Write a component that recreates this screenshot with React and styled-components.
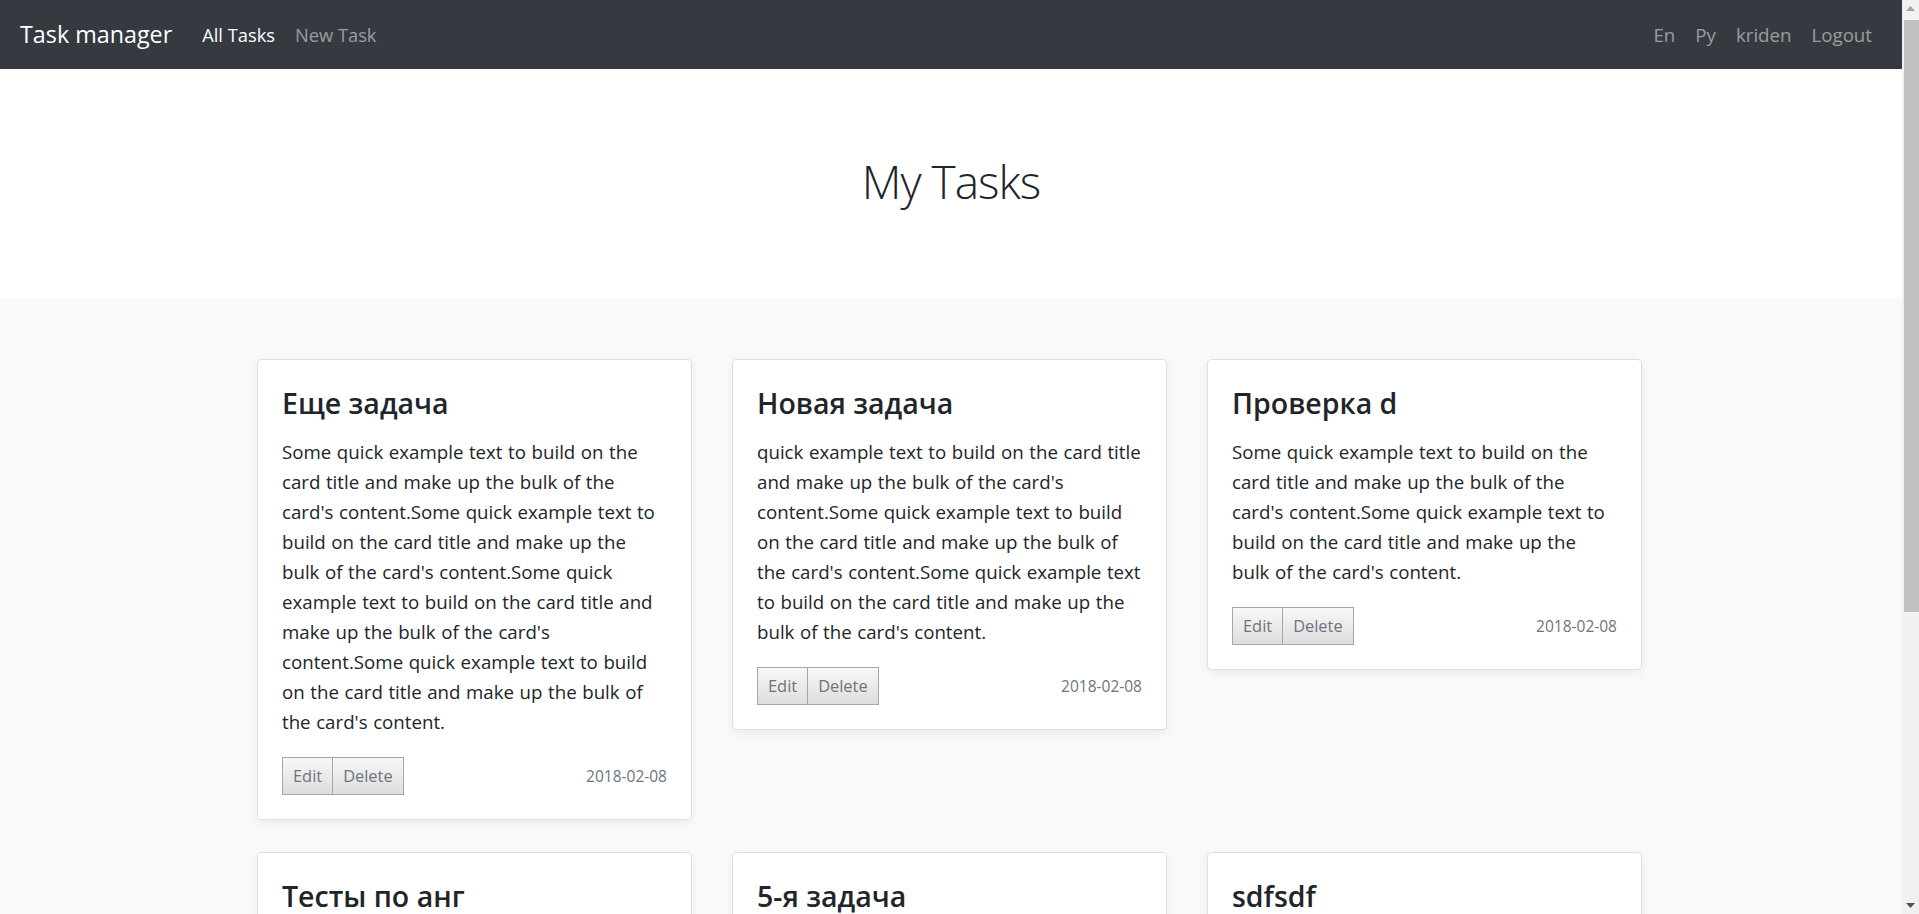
import React from "react";
import styled, { createGlobalStyle } from "styled-components";

const GlobalStyle = createGlobalStyle`
  html, body { margin: 0; padding: 0; }
  body {
    font-family: "Open Sans", "Noto Sans", Arial, sans-serif;
    background: #f8f9fa;
    color: #212529;
  }
  * { box-sizing: border-box; }
`;

const Viewport = styled.div`
  display: flex;
  height: 100vh;
  overflow: hidden;
`;

const Page = styled.div`
  flex: 1;
  min-width: 0;
  overflow: hidden;
  background: #f8f9fa;
`;

const ScrollTrack = styled.div`
  width: 17px;
  flex: none;
  background: #f1f1f1;
  display: flex;
  flex-direction: column;
  align-items: center;
`;

const ScrollArrow = styled.div`
  height: 17px;
  width: 100%;
  display: flex;
  align-items: center;
  justify-content: center;
  flex: none;
`;

const ScrollThumb = styled.div`
  width: 15px;
  margin-left: 1px;
  height: 592px;
  margin-top: 3px;
  background: #c1c1c1;
`;

const ScrollSpacer = styled.div`
  flex: 1;
`;

const Navbar = styled.nav`
  height: 69px;
  background: #343a40;
  display: flex;
  align-items: center;
  padding: 0 20px;
`;

const Brand = styled.a`
  font-size: 23.3px;
  color: #fff;
  margin-right: 20px;
  text-decoration: none;
  line-height: 1.5;
`;

const NavList = styled.div`
  display: flex;
  align-items: center;
  margin-left: ${(p) => (p.$right ? "auto" : "0")};
  font-size: ${(p) => (p.$right ? "18.7px" : "18.3px")};
`;

const NavLink = styled.a`
  font-size: inherit;
  padding: 10px;
  color: ${(p) => (p.$active ? "#fff" : "rgba(255,255,255,0.5)")};
  text-decoration: none;
`;

const Jumbotron = styled.header`
  background: #fff;
  height: 229px;
  display: flex;
  align-items: center;
  justify-content: center;
`;

const PageTitle = styled.h1`
  margin: 0 0 4px;
  font-size: 46px;
  letter-spacing: -1px;
  font-weight: 300;
  color: #212529;
  line-height: 1.2;
`;

const Main = styled.main`
  padding: 61px 3px 40px 0;
  display: grid;
  grid-template-columns: repeat(3, 435px);
  column-gap: 40px;
  row-gap: 32px;
  justify-content: center;
  align-items: start;
`;

const Card = styled.article`
  background: #fff;
  border: 1px solid rgba(0, 0, 0, 0.125);
  border-radius: 5px;
  box-shadow: 0 3px 10px rgba(0, 0, 0, 0.06);
  padding: 24px;
`;

const CardTitle = styled.h4`
  margin: 0 0 15px;
  font-size: 28.5px;
  font-weight: 600;
  line-height: 38px;
  color: #212529;
`;

const CardText = styled.p`
  margin: 0 0 20px;
  font-size: 18.7px;
  word-spacing: 0.7px;
  line-height: 30px;
  color: #212529;
`;

const CardFooter = styled.div`
  display: flex;
  align-items: center;
  justify-content: space-between;
`;

const BtnGroup = styled.div`
  display: flex;
`;

const Btn = styled.button`
  font-family: inherit;
  font-size: 16.4px;
  line-height: 26px;
  padding: 5px 10px;
  color: #6c757d;
  background: linear-gradient(#f8f8f8, #dddddd);
  border: 1px solid #a6a6a6;
  border-radius: 0;
  cursor: pointer;
  & + & { border-left: none; }
`;

const DateText = styled.small`
  font-size: 15.5px;
  color: #6c757d;
`;

const lorem = "Some quick example text to build on the card title and make up the bulk of the card's content.";

const tasks = [
  { title: "Еще задача", text: lorem + lorem + lorem + lorem },
  { title: "Новая задача", text: "quick example text to build on the card title and make up the bulk of the card's content." + lorem + lorem },
  { title: "Проверка d", text: lorem + lorem },
  { title: "Тесты по анг", text: lorem + lorem },
  { title: "5-я задача", text: lorem + lorem },
  { title: "sdfsdf", text: lorem },
];

export default function App() {
  return (
    <>
      <GlobalStyle />
      <Viewport>
        <Page>
          <Navbar>
            <Brand href="#">Task manager</Brand>
            <NavList>
              <NavLink $active href="#">All Tasks</NavLink>
              <NavLink href="#">New Task</NavLink>
            </NavList>
            <NavList $right>
              <NavLink href="#">En</NavLink>
              <NavLink href="#">Py</NavLink>
              <NavLink href="#">kriden</NavLink>
              <NavLink href="#">Logout</NavLink>
            </NavList>
          </Navbar>
          <Jumbotron>
            <PageTitle>My Tasks</PageTitle>
          </Jumbotron>
          <Main>
            {tasks.map((t, i) => (
              <Card key={i}>
                <CardTitle>{t.title}</CardTitle>
                <CardText>{t.text}</CardText>
                <CardFooter>
                  <BtnGroup>
                    <Btn>Edit</Btn>
                    <Btn>Delete</Btn>
                  </BtnGroup>
                  <DateText>2018-02-08</DateText>
                </CardFooter>
              </Card>
            ))}
          </Main>
        </Page>
        <ScrollTrack>
          <ScrollArrow>
            <svg width="9" height="5" viewBox="0 0 9 5"><path d="M0 5 L4.5 0 L9 5 Z" fill="#a3a3a3" /></svg>
          </ScrollArrow>
          <ScrollThumb />
          <ScrollSpacer />
          <ScrollArrow>
            <svg width="9" height="5" viewBox="0 0 9 5"><path d="M0 0 L4.5 5 L9 0 Z" fill="#505050" /></svg>
          </ScrollArrow>
        </ScrollTrack>
      </Viewport>
    </>
  );
}
